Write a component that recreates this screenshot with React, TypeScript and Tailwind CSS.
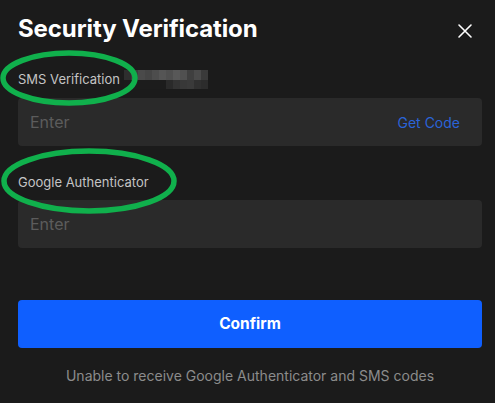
import React from "react";

const topRow = ["#2e2e2e", "#3d3d3d", "#4a4a4a", "#454545", "#4d4d4d", "#555555", "#4f4f4f", "#585858", "#505050", "#3f3f3f", "#4a4a4a", "#3a3a3a"];
const botRow = ["#1c1c1c", "#1c1c1c", "#1c1c1c", "#1c1c1c", "#1c1c1c", "#1c1c1c", "#2a2a2a", "#333333", "#383838", "#3a3a3a", "#303030", "#2c2c2c"];

export default function App() {
  return (
    <div
      className="relative w-[495px] h-[403px] bg-[#1b1b1b] overflow-hidden"
      style={{ fontFamily: "Inter, 'Liberation Sans', sans-serif" }}
    >
      <div className="flex flex-col pl-[18px] pr-[13px] pt-[14px]">
        <div className="flex items-center justify-between h-[30px]">
          <h1 className="text-[24px] font-bold text-white leading-none tracking-[-0.1px]">Security Verification</h1>
          <svg width="16" height="16" viewBox="0 0 16 16" className="mr-[9px] mt-[4px]">
            <path d="M2 2 L14 14 M14 2 L2 14" stroke="#ffffff" strokeWidth="1.6" strokeLinecap="round" />
          </svg>
        </div>

        <div className="flex items-center mt-[25px] h-[20px]">
          <span className="text-[13px] text-[#c4c4c4] leading-none">SMS Verification</span>
          <div className="ml-[4px] flex flex-col">
            <div className="flex">
              {topRow.map((c, i) => (
                <div key={i} className="w-[7px] h-[10px]" style={{ background: c }} />
              ))}
            </div>
            <div className="flex">
              {botRow.map((c, i) => (
                <div key={i} className="w-[7px] h-[9px]" style={{ background: c }} />
              ))}
            </div>
          </div>
        </div>

        <div className="mt-[9px] h-[48px] rounded-[4px] bg-[#2a2a2a] flex items-center justify-between px-[12px]">
          <span className="text-[16px] text-[#5c5c5c]">Enter</span>
          <span className="text-[14px] text-[#2a64d8] mr-[10px]">Get Code</span>
        </div>

        <div className="flex items-center mt-[26px] h-[20px]">
          <span className="text-[13px] text-[#c4c4c4] leading-none">Google Authenticator</span>
        </div>

        <div className="mt-[8px] h-[48px] rounded-[4px] bg-[#2a2a2a] flex items-center px-[12px]">
          <span className="text-[16px] text-[#5c5c5c]">Enter</span>
        </div>

        <button className="mt-[52px] h-[48px] rounded-[4px] bg-[#0f5fff] flex items-center justify-center">
          <span className="text-[15.5px] font-bold text-white">Confirm</span>
        </button>

        <div className="mt-[17px] text-center text-[14px] text-[#8c8c8c]">
          Unable to receive Google Authenticator and SMS codes
        </div>
      </div>

      <svg className="absolute left-0 top-0 pointer-events-none" width="495" height="403" viewBox="0 0 495 403">
        <ellipse cx="69" cy="78" rx="66" ry="25" fill="none" stroke="#10b04c" strokeWidth="5.5" />
        <ellipse cx="89" cy="181" rx="85" ry="30" fill="none" stroke="#10b04c" strokeWidth="5.5" />
      </svg>
    </div>
  );
}
